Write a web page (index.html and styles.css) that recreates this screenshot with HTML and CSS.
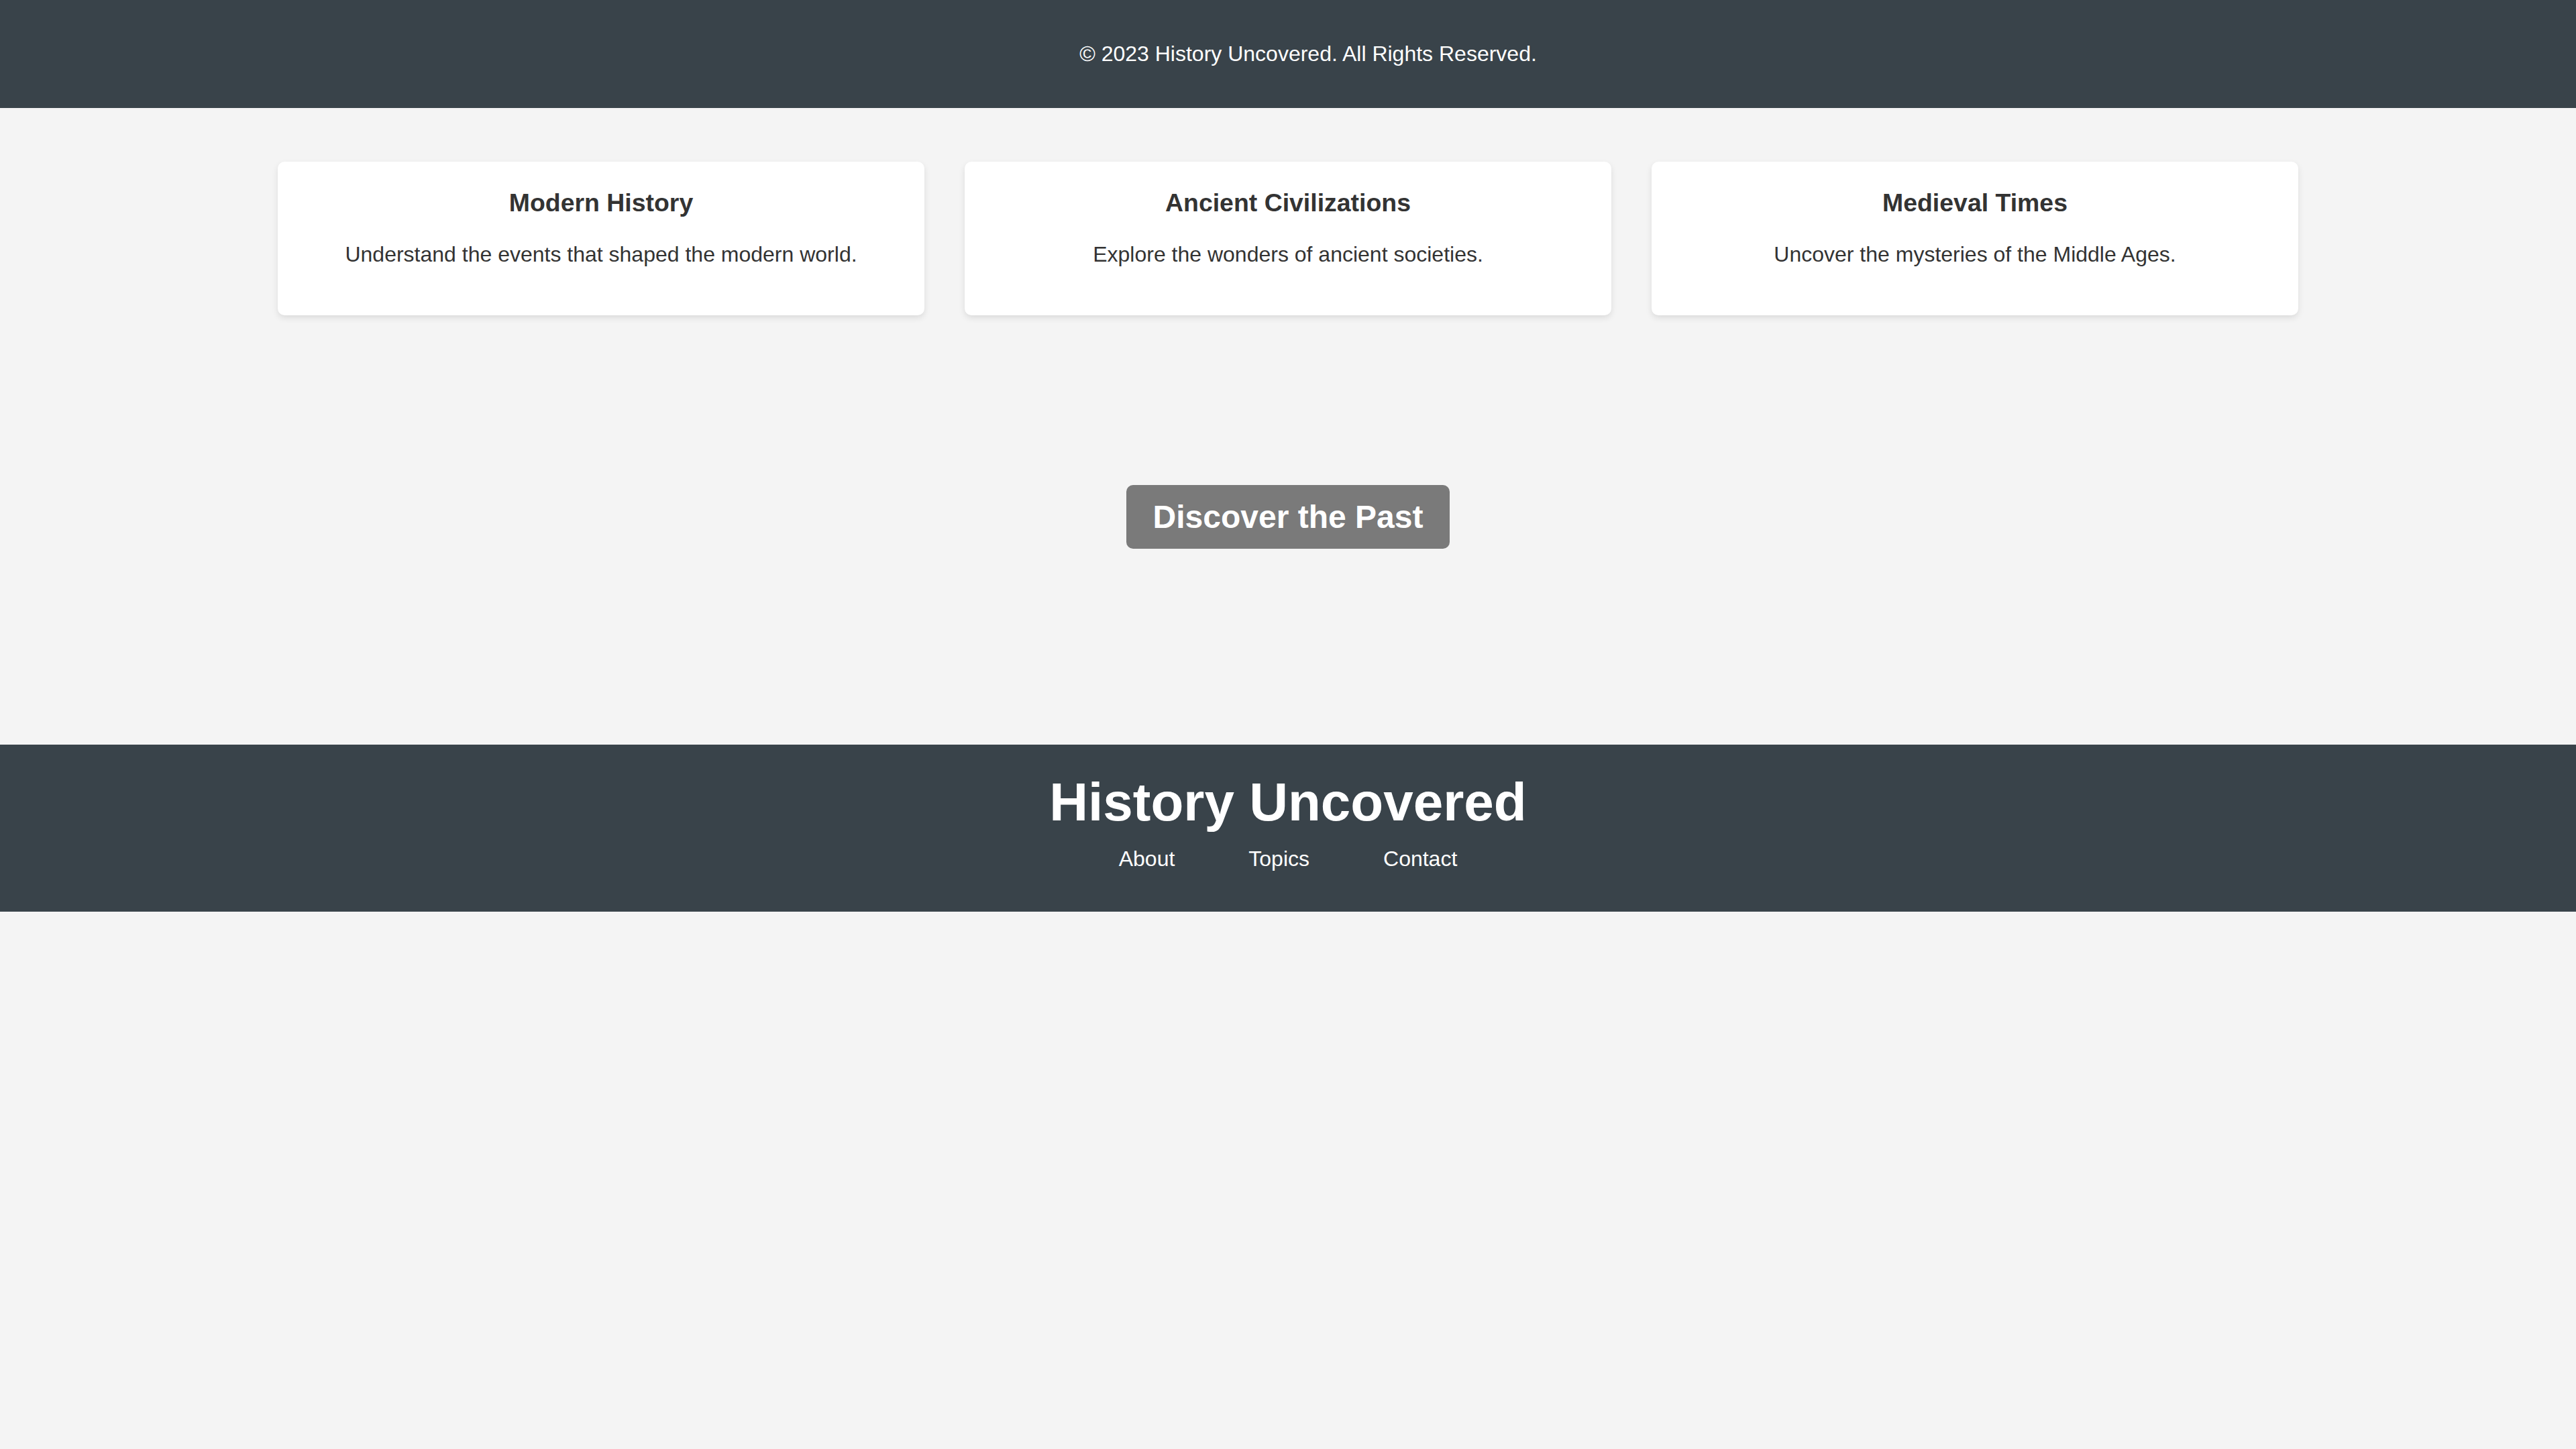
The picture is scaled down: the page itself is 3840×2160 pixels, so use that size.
FILE: index.html
```html
<!DOCTYPE html>
<html lang="en">
<head>
<meta charset="utf-8">
<title>History Uncovered</title>
<link rel="stylesheet" href="styles.css">
</head>
<body>
<header class="topbar">
  <p>&copy; 2023 History Uncovered. All Rights Reserved.</p>
</header>
<main>
  <section class="cards">
    <article class="card">
      <h3>Modern History</h3>
      <p>Understand the events that shaped the modern world.</p>
    </article>
    <article class="card">
      <h3>Ancient Civilizations</h3>
      <p>Explore the wonders of ancient societies.</p>
    </article>
    <article class="card">
      <h3>Medieval Times</h3>
      <p>Uncover the mysteries of the Middle Ages.</p>
    </article>
  </section>
  <section class="hero">
    <h2 class="hero-title">Discover the Past</h2>
  </section>
</main>
<footer class="site-footer">
  <h1 class="brand">History Uncovered</h1>
  <nav class="nav">
    <a href="#">About</a>
    <a href="#">Topics</a>
    <a href="#">Contact</a>
  </nav>
</footer>
</body>
</html>
```
FILE: styles.css
```css
html, body {
  margin: 0;
  padding: 0;
}
body {
  background: #f4f4f4;
  color: #333;
  font-family: "Liberation Sans", Arial, sans-serif;
  min-height: 2160px;
}
.topbar {
  background: #39434a;
  color: #fff;
  padding: 30px 0 30px 60px;
  text-align: center;
}
.topbar p {
  margin: 32px 0;
  font-size: 32px;
}
.cards {
  width: 3012px;
  margin: 80px auto 0;
  display: grid;
  grid-template-columns: repeat(3, 1fr);
  gap: 60px;
}
.card {
  background: #fff;
  border-radius: 10px;
  box-shadow: 0 4px 10px rgba(0, 0, 0, 0.1);
  padding: 40px;
  text-align: center;
}
.card h3 {
  font-size: 37.44px;
  font-weight: bold;
  margin: 0 0 37.44px;
  color: #333;
}
.card p {
  font-size: 32px;
  margin: 32px 0;
  color: #333;
}
.hero {
  padding: 253px 0 292px;
  text-align: center;
}
.hero-title {
  display: inline-block;
  margin: 0;
  background: #7a7a7a;
  color: #fff;
  font-size: 48px;
  font-weight: bold;
  padding: 20px 40px;
  border-radius: 10px;
}
.site-footer {
  background: #39434a;
  color: #fff;
  text-align: center;
  padding: 40px 0;
}
.brand {
  margin: 0;
  font-size: 80px;
  font-weight: bold;
}
.nav {
  display: flex;
  justify-content: center;
  gap: 110px;
  padding: 20px 0;
}
.nav a {
  color: #fff;
  text-decoration: none;
  font-size: 32px;
}
```
